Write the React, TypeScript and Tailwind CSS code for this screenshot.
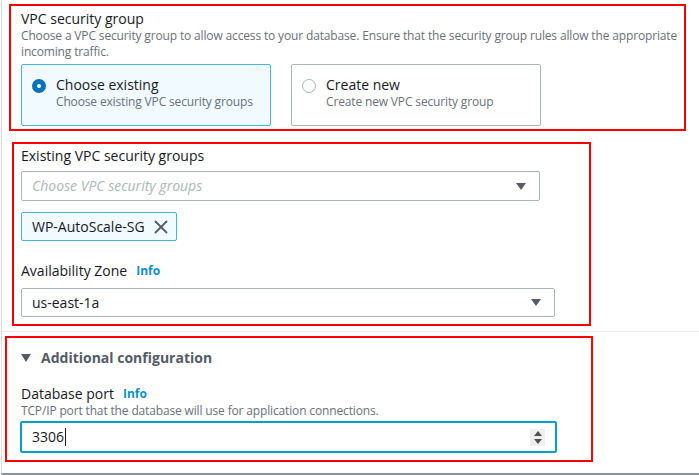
import { X } from "lucide-react";

function Caret() {
  return (
    <svg width="10" height="7" viewBox="0 0 10 7" className="shrink-0">
      <path d="M0 0h10L5 7z" fill="#545b64" />
    </svg>
  );
}

function Info() {
  return <span className="ml-[9px] text-[12px] font-bold leading-[20px] text-[#0a90cc]">Info</span>;
}

function Tile({ title, sub, selected }: { title: string; sub: string; selected?: boolean }) {
  return (
    <div
      className={
        selected
          ? "flex h-[62px] gap-[10px] rounded-[2px] border border-[#44b9d6] bg-[#f1faff] pl-[10px] pt-[10px]"
          : "flex h-[62px] gap-[10px] rounded-[2px] border border-[#aab7b8] bg-white pl-[10px] pt-[10px]"
      }
    >
      <span
        className={
          selected
            ? "mt-[4px] h-[14px] w-[14px] shrink-0 rounded-full border-[5px] border-[#0073bb] bg-white"
            : "mt-[4px] h-[14px] w-[14px] shrink-0 rounded-full border border-[#aab7b8] bg-white"
        }
      />
      <div className="flex flex-col">
        <span className="text-[14px] leading-[20px] text-[#16191f]">{title}</span>
        <span className="-mt-px text-[12px] leading-[16px] tracking-[-0.15px] text-[#687078]">{sub}</span>
      </div>
    </div>
  );
}

export default function App() {
  return (
    <div
      className="ml-px flex h-[475px] w-[698px] flex-col overflow-hidden border-b-2 border-l border-b-[#879596] border-l-[#d5dbdb] bg-white"
      style={{ fontFamily: '"Open Sans", "Noto Sans", sans-serif' }}
    >
      <div className="h-[332px] shrink-0 border-b border-[#eaeded] pt-[4px]">
        <div className="ml-[7px] h-[127px] w-[677px] border-2 border-[#ff0000] pl-[10px] pt-[3px]">
          <div className="text-[14px] leading-[20px] text-[#16191f]">VPC security group</div>
          <p className="-mt-px whitespace-nowrap text-[12px] leading-[16px] tracking-[-0.15px] text-[#687078]">
            Choose a VPC security group to allow access to your database. Ensure that the security group rules allow the appropriate
            <br />
            incoming traffic.
          </p>
          <div className="mt-[4px] grid w-[520px] grid-cols-2 gap-[20px]">
            <Tile selected title="Choose existing" sub="Choose existing VPC security groups" />
            <Tile title="Create new" sub="Create new VPC security group" />
          </div>
        </div>

        <div className="ml-[10px] mt-[11px] h-[184px] w-[579px] border-2 border-[#ff0000] pl-[7px] pt-[2px]">
          <div className="text-[14px] leading-[20px] text-[#16191f]">Existing VPC security groups</div>
          <div className="mt-[5px] flex h-[30px] w-[519px] items-center justify-between rounded-[2px] border border-[#aab7b8] pl-[10px] pr-[13px]">
            <span className="text-[14px] italic leading-[20px] text-[#aab7b8]">Choose VPC security groups</span>
            <Caret />
          </div>
          <div className="mt-[11px] flex h-[29px] w-[156px] items-center justify-between rounded-[2px] border border-[#44b9d6] bg-[#f1faff] pl-[10px] pr-[4px]">
            <span className="text-[14px] leading-[20px] text-[#16191f]">WP-AutoScale-SG</span>
            <X className="h-[22px] w-[22px] text-[#545b64]" strokeWidth={2} />
          </div>
          <div className="mt-[20px] flex items-center">
            <span className="text-[14px] leading-[20px] text-[#16191f]">Availability Zone</span>
            <Info />
          </div>
          <div className="mt-[7px] flex h-[29px] w-[534px] items-center justify-between rounded-[2px] border border-[#aab7b8] pl-[10px] pr-[13px]">
            <span className="text-[14px] leading-[20px] text-[#16191f]">us-east-1a</span>
            <Caret />
          </div>
        </div>
      </div>

      <div className="pt-[4px]">
        <div className="ml-[3px] h-[126px] w-[588px] border-2 border-[#ff0000] pt-[10px]">
          <div className="flex items-center pl-[14px]">
            <svg width="10" height="8" viewBox="0 0 10 8" className="mr-[10px]">
              <path d="M0 0h10L5 8z" fill="#545b64" />
            </svg>
            <span className="text-[14px] font-bold leading-[20px] text-[#545b64]">Additional configuration</span>
          </div>
          <div className="mt-[16px] flex items-center pl-[14px]">
            <span className="text-[14px] leading-[20px] text-[#16191f]">Database port</span>
            <Info />
          </div>
          <div className="-mt-px pl-[14px] text-[12px] leading-[16px] tracking-[-0.15px] text-[#687078]">
            TCP/IP port that the database will use for application connections.
          </div>
          <div className="ml-[13px] mt-[2px] flex h-[32px] w-[537px] items-center justify-between rounded-[2px] border-2 border-[#00a1c9] pl-[10px] pr-[10px]">
            <span className="flex items-center text-[14px] leading-[20px] text-[#16191f]">
              3306<span className="ml-px h-[18px] w-px bg-[#16191f]" />
            </span>
            <span className="flex h-[17px] w-[15px] flex-col items-center justify-center gap-[3px] bg-[#efefef]">
              <svg width="8" height="5" viewBox="0 0 8 5">
                <path d="M0 5h8L4 0z" fill="#505050" />
              </svg>
              <svg width="8" height="5" viewBox="0 0 8 5">
                <path d="M0 0h8L4 5z" fill="#505050" />
              </svg>
            </span>
          </div>
        </div>
      </div>
    </div>
  );
}
